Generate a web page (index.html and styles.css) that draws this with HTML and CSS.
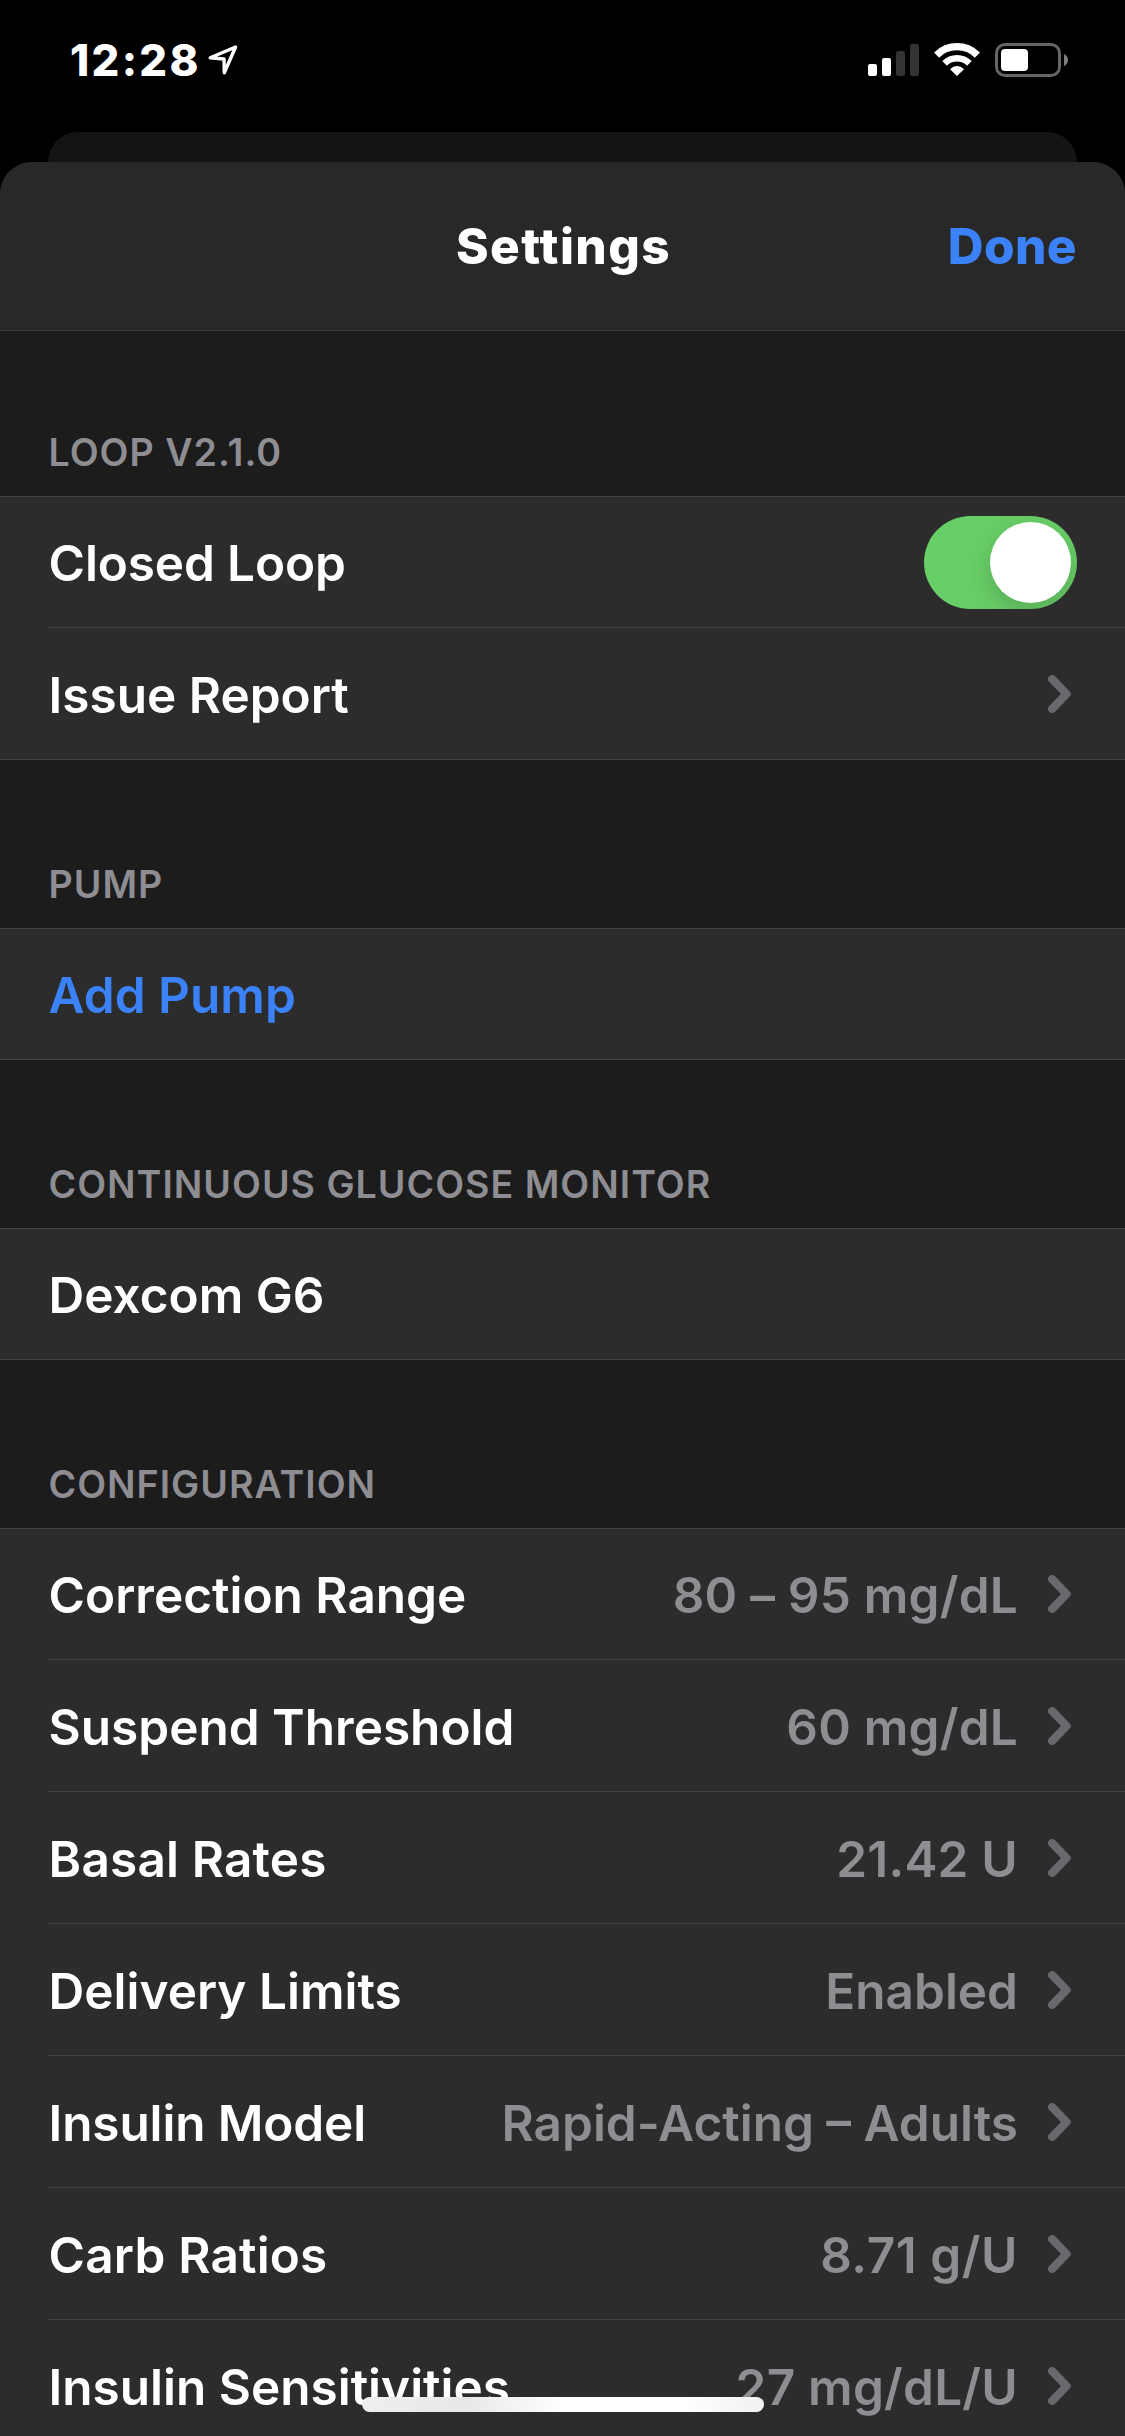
FILE: index.html
```html
<!DOCTYPE html>
<html lang="en">
<head>
<meta charset="utf-8">
<title>Settings</title>
<link rel="stylesheet" href="styles.css">
</head>
<body>
<svg class="defs" aria-hidden="true">
  <symbol id="chevron" viewBox="0 0 23 38"><path d="M4.2 4.2 18.6 19 4.2 33.8" fill="none" stroke="currentColor" stroke-width="8.2" stroke-linecap="round" stroke-linejoin="round"/></symbol>
</svg>
<div class="screen">
  <div class="status-bar">
    <span class="time">12:28</span>
    <svg class="location" viewBox="0 0 32 32"><path d="M28.6 3 3.2 13.8 17 15 17.3 28.8Z" fill="none" stroke="#fff" stroke-width="3.4" stroke-linejoin="round"/></svg>
    <div class="indicators">
      <svg class="signal" viewBox="0 0 51 32">
        <rect x="0" y="20" width="9" height="12" rx="2" fill="#fff"/>
        <rect x="14" y="14" width="9" height="18" rx="2" fill="#fff"/>
        <rect x="28" y="7" width="9" height="25" rx="2" fill="#333"/>
        <rect x="42" y="0" width="9" height="32" rx="2" fill="#333"/>
      </svg>
      <svg class="wifi" viewBox="0 0 46 33">
        <g fill="none" stroke="#fff">
          <path d="M2.6 12.1A29 29 0 0 1 43.4 12.1" stroke-width="7.2"/>
          <path d="M10.6 20.3A17.6 17.6 0 0 1 35.4 20.3" stroke-width="6.6"/>
        </g>
        <path d="M23 33 16 26.2Q19.2 22.9 23 22.9T30 26.2Z" fill="#fff"/>
      </svg>
      <svg class="battery" viewBox="0 0 73 34">
        <rect x="1.5" y="1.5" width="63" height="31" rx="8.5" fill="none" stroke="#666" stroke-width="3"/>
        <rect x="6" y="6" width="27" height="22" rx="4" fill="#fff"/>
        <path d="M69 11Q73 13 73 17T69 23Z" fill="#808080"/>
      </svg>
    </div>
  </div>
  <div class="back-sheet"></div>
  <main class="sheet">
    <header class="nav">
      <h1 class="nav-title">Settings</h1>
      <span class="nav-done">Done</span>
    </header>

    <h2 class="section-title first">Loop v2.1.0</h2>
    <div class="group">
      <div class="row"><div class="cell"><span class="label tight">Closed Loop</span><span class="toggle"><span class="knob"></span></span></div></div>
      <div class="row"><div class="cell"><span class="label">Issue Report</span><svg class="chevron"><use href="#chevron"/></svg></div></div>
    </div>

    <h2 class="section-title">Pump</h2>
    <div class="group">
      <div class="row"><div class="cell"><span class="label action">Add Pump</span></div></div>
    </div>

    <h2 class="section-title">Continuous Glucose Monitor</h2>
    <div class="group">
      <div class="row"><div class="cell"><span class="label">Dexcom G6</span></div></div>
    </div>

    <h2 class="section-title">Configuration</h2>
    <div class="group">
      <div class="row"><div class="cell"><span class="label">Correction Range</span><span class="value">80 – 95 mg/dL</span><svg class="chevron"><use href="#chevron"/></svg></div></div>
      <div class="row"><div class="cell"><span class="label">Suspend Threshold</span><span class="value">60 mg/dL</span><svg class="chevron"><use href="#chevron"/></svg></div></div>
      <div class="row"><div class="cell"><span class="label loose">Basal Rates</span><span class="value">21.42 U</span><svg class="chevron"><use href="#chevron"/></svg></div></div>
      <div class="row"><div class="cell"><span class="label">Delivery Limits</span><span class="value word">Enabled</span><svg class="chevron"><use href="#chevron"/></svg></div></div>
      <div class="row"><div class="cell"><span class="label tight">Insulin Model</span><span class="value word">Rapid-Acting – Adults</span><svg class="chevron"><use href="#chevron"/></svg></div></div>
      <div class="row"><div class="cell"><span class="label loose">Carb Ratios</span><span class="value ratio">8.71 g/U</span><svg class="chevron"><use href="#chevron"/></svg></div></div>
      <div class="row"><div class="cell"><span class="label">Insulin Sensitivities</span><span class="value">27 mg/dL/U</span><svg class="chevron"><use href="#chevron"/></svg></div></div>
    </div>
  </main>
  <div class="home-indicator"></div>
</div>
</body>
</html>
```
FILE: styles.css
```css
* { box-sizing: border-box; }

body {
  margin: 0;
  background: #000;
  color: #fff;
  font-family: Inter, "Liberation Sans", sans-serif;
}

.defs { display: none; }

.screen {
  position: relative;
  width: 1125px;
  height: 2436px;
  overflow: hidden;
  background: #000;
}

/* Status bar */
.status-bar {
  display: flex;
  align-items: flex-start;
  height: 132px;
  padding: 43px 57px 0 70px;
}
.time {
  margin-top: 1px;
  height: 34px;
  line-height: 34px;
  font-size: 43.6px;
  font-weight: 800;
  letter-spacing: 2.3px;
}
.location { width: 32px; height: 32px; margin: 1px 0 0 6.3px; }
.indicators { display: flex; align-items: flex-start; margin-left: auto; }
.signal { width: 51px; height: 32px; margin: 1px 15px 0 0; }
.wifi { width: 46px; height: 33px; margin-right: 15px; }
.battery { width: 73px; height: 34px; }

/* Stacked sheets */
.back-sheet {
  height: 30px;
  margin: 0 48px;
  border-radius: 30px 30px 0 0;
  background: #141414;
}
.sheet {
  overflow: hidden;
  border-radius: 32px 32px 0 0;
  background: #1c1c1c;
}

.nav {
  display: grid;
  grid-template-columns: 1fr auto 1fr;
  align-items: center;
  height: 169px;
  padding: 0 48px;
  border-bottom: 1px solid #3d3d3d;
  background: #282828;
  font-size: 49.5px;
  line-height: 60px;
}
.nav-title {
  grid-column: 2;
  margin: 0;
  padding-left: 2px;
  font-size: inherit;
  font-weight: 800;
  letter-spacing: 1.4px;
}
.nav-done {
  justify-self: end;
  color: #3b82f9;
  font-weight: 800;
  letter-spacing: 0.4px;
}

.section-title {
  display: flex;
  align-items: flex-end;
  height: 168px;
  margin: 0;
  padding: 0 48px 20px 48.5px;
  color: #8e8d92;
  font-size: 37.6px;
  font-weight: 600;
  line-height: 46px;
  letter-spacing: 1px;
  text-transform: uppercase;
}
.section-title.first { height: 165px; }

/* Grouped rows */
.group {
  border-top: 1px solid #424243;
  border-bottom: 1px solid #424243;
  background: #2c2c2c;
}
.row { padding-left: 48px; }
.cell {
  display: flex;
  align-items: center;
  height: 132px;
  padding-right: 54px;
  border-bottom: 1px solid #424243;
}
.row:first-child .cell { height: 131px; }
.row:last-child .cell { height: 131px; border-bottom: 0; }
.row:only-child .cell { height: 130px; }

.label, .value {
  padding-top: 2px;
  font-size: 49.5px;
  font-weight: 600;
  line-height: 60px;
  white-space: nowrap;
}
.row + .row .label, .row + .row .value { padding-top: 3px; }
.label { flex: 1; padding-left: 0.6px; }
.tight { letter-spacing: -0.13px; }
.loose { letter-spacing: 0.18px; }
.action { color: #3b82f9; }

.value {
  margin-right: 30px;
  color: #8e8d92;
  letter-spacing: 0.22px;
}
.value.word { letter-spacing: 0; }
.value.ratio { letter-spacing: 0.55px; }

.chevron { width: 23px; height: 38px; color: #68686d; }
.row + .row .chevron { margin-top: 1px; }

.toggle {
  display: flex;
  width: 153px;
  height: 93px;
  margin-right: -6px;
  padding: 6px;
  justify-content: flex-end;
  overflow: hidden;
  border-radius: 47px;
  background: #68ce67;
}
.knob {
  width: 81px;
  height: 81px;
  border-radius: 50%;
  background: #fff;
  box-shadow: 0 9px 24px rgba(0, 0, 0, 0.17);
}

.home-indicator {
  position: absolute;
  left: 362px;
  bottom: 24px;
  width: 402px;
  height: 15px;
  border-radius: 8px;
  background: linear-gradient(90deg, #efefef 0%, #e8e8e8 26%, #fff 50%, #fff 80%, #f1f1f1 100%);
}
```
